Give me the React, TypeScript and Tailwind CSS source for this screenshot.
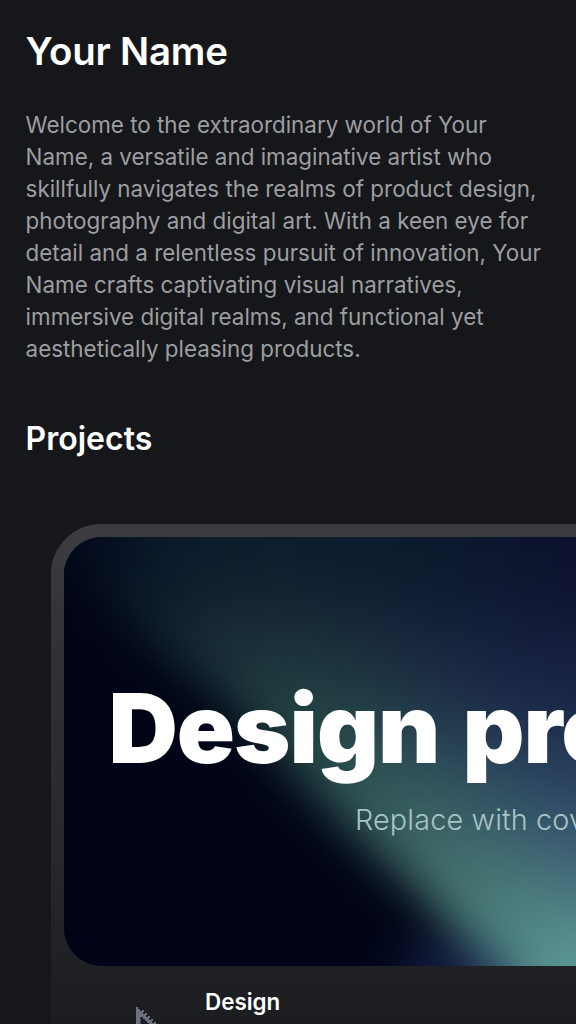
const INTER = "font-['Inter',sans-serif]";

const AURORA: string[][] = [
  ['#060e20', '#0a192a', '#0e1d2c', '#0e1e2e', '#0d1c2e', '#0c1a2d', '#0c172e', '#0c132d', '#0c102c'],
  ['#0a1622', '#12252f', '#182c36', '#192d38', '#182a3a', '#16243b', '#14203b', '#141d3a', '#131a38'],
  ['#0a1820', '#152c32', '#1f3a3d', '#22403f', '#203c43', '#1f3446', '#1c2c47', '#1a2646', '#192344'],
  ['#0a1820', '#152c32', '#1f3a3d', '#274a4a', '#2c5150', '#2d4e55', '#294459', '#263c58', '#243756'],
  ['#0a1820', '#152c32', '#1f3a3d', '#2c5550', '#355f5a', '#3b6664', '#3b6169', '#36586d', '#34506e'],
  ['#0a1820', '#152c32', '#1f3a3d', '#2c5550', '#3a665f', '#437068', '#487872', '#49787b', '#496c82'],
  ['#0a1820', '#152c32', '#1f3a3d', '#2c5550', '#35605a', '#44726c', '#4e8580', '#59958e', '#5a9a97'],
];

function Aurora() {
  return (
    <svg className="absolute inset-0 h-full w-[576px]" viewBox="0 0 576 429" preserveAspectRatio="none" aria-hidden="true">
      <defs>
        <filter id="mesh" filterUnits="userSpaceOnUse" x="-120" y="-120" width="816" height="669" colorInterpolationFilters="sRGB">
          <feGaussianBlur stdDeviation="32" />
        </filter>
        <filter id="edge" filterUnits="userSpaceOnUse" x="-150" y="-150" width="876" height="729" colorInterpolationFilters="sRGB">
          <feGaussianBlur stdDeviation="23" />
        </filter>
      </defs>
      <rect width="576" height="429" fill="#0d1a2b" />
      <g filter="url(#mesh)">
        {AURORA.map((row, r) =>
          row.map((fill, c) => {
            const x = c === 0 ? -110 : c * 64;
            const y = r === 0 ? -110 : r * 64;
            const right = c === 8 ? 686 : (c + 1) * 64;
            const bottom = r === 6 ? 539 : (r + 1) * 64;
            return <rect key={`${r}-${c}`} x={x} y={y} width={right - x + 0.5} height={bottom - y + 0.5} fill={fill} />;
          }),
        )}
      </g>
      <g filter="url(#edge)">
        <path d="M-100-40 L-16 -20 L32 58 L92 110 L156 158 L222 226 L292 298 L342 342 L380 384 L430 448 L480 540 L-100 540Z" fill="#010416" />
      </g>
      <ellipse cx="392" cy="434" rx="66" ry="32" fill="#26366f" opacity=".45" filter="url(#edge)" />
    </svg>
  );
}

function CursorIcon() {
  return (
    <svg className="mt-[17px] h-10 w-10 shrink-0" viewBox="0 0 40 40" fill="#6d717d" aria-hidden="true">
      <path d="M0 0H2V2H4V4H6V3H8V5H7V7H9V6H11V8H10V10H12V9H14V11H13V13H15V12H17V14H16V16H18V15H20V17H19V19H21V18H23V22H17V20H15V18H13V16H11V14H9V12H7V10H4.500V40H0Z" />
    </svg>
  );
}

export default function App() {
  return (
    <main className={`flex h-[1024px] w-full flex-col overflow-hidden bg-[#16171a] px-[25.6px] pt-[25.6px] text-white ${INTER}`}>
      <h1 className="text-[38.4px] leading-[51.2px] font-semibold tracking-[-0.2px]">Your Name</h1>
      <p className="mt-8 h-64 w-[525px] text-[22.4px] leading-8 whitespace-nowrap text-[#9d9ea1]">
        Welcome to the extraordinary world of Your<br />
        Name, a versatile and imaginative artist who<br />
        skillfully navigates the realms of product design,<br />
        photography and digital art. With a keen eye for<br />
        detail and a relentless pursuit of innovation, Your<br />
        Name crafts captivating visual narratives,<br />
        immersive digital realms, and functional yet<br />
        aesthetically pleasing products.
      </p>
      <h2 className="mt-[52px] text-[32px] leading-[44.8px] font-semibold">Projects</h2>
      <article className="mt-[62.8px] ml-[25.6px] h-[640px] w-[820px] shrink-0 rounded-[50px] bg-[linear-gradient(180deg,#3c3d40_0px,#323336_100px,#27282b_330px,#202124_430px,#1c1d20_500px)] p-[12.8px]">
        <div className="relative h-[429px] overflow-hidden rounded-[38px] bg-[#010416]">
          <Aurora />
          <div className="relative flex w-[794px] flex-col items-start whitespace-nowrap">
            <div className="mt-[133px] ml-[44.5px] text-[96px] leading-[116px] font-black tracking-[-1px] [word-spacing:5px]">Design project</div>
            <div className="mt-[16px] ml-[291px] text-[28.8px] leading-[36px] font-light tracking-[0.15px] text-[#a9c3c6]">Replace with cover image</div>
          </div>
        </div>
        <div className="flex pt-[24px] pl-[72px]">
          <CursorIcon />
          <div className="-mt-[4px] ml-[29px] text-[22.4px] leading-8 font-semibold">Design</div>
        </div>
      </article>
    </main>
  );
}
